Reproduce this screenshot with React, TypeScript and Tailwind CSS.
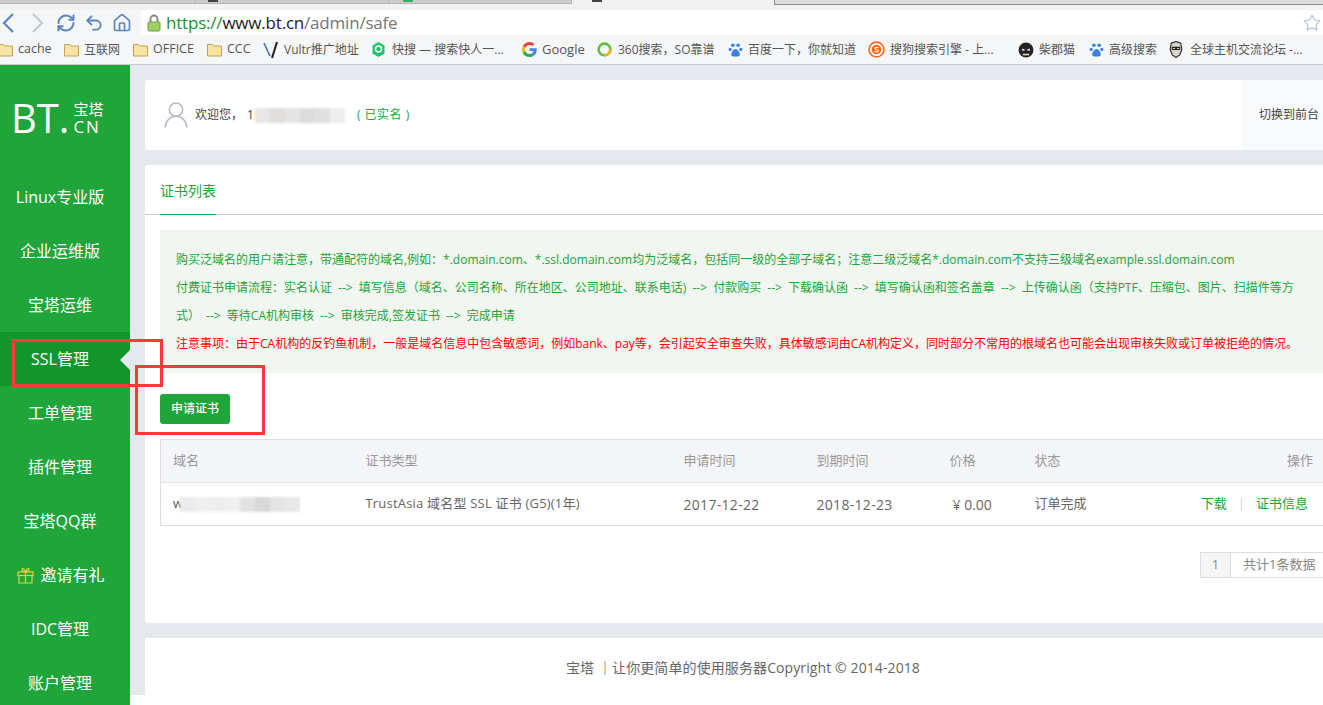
import React from 'react';
import { House, RefreshCw, Star, Undo2, UserRound } from 'lucide-react';

const menuItems = [
  'Linux专业版',
  '企业运维版',
  '宝塔运维',
  'SSL管理',
  '工单管理',
  '插件管理',
  '宝塔QQ群',
  '邀请有礼',
  'IDC管理',
  '账户管理',
];

function FolderIcon(): React.JSX.Element {
  return (
    <svg width="15" height="14" viewBox="0 0 15 14" className="shrink-0">
      <path d="M.5 1.500h5l1.500 1.500h7.500v10H.5z" fill="#f8e3a6" stroke="#c9a24f" strokeWidth="1" />
    </svg>
  );
}

function PawIcon(): React.JSX.Element {
  return (
    <svg width="15" height="16" viewBox="0 0 14 15" className="shrink-0">
      <circle cx="4.500" cy="3" r="1.700" fill="#3b7fe0" />
      <circle cx="9.500" cy="3" r="1.700" fill="#3b7fe0" />
      <circle cx="2" cy="7" r="1.500" fill="#3b7fe0" />
      <circle cx="12" cy="7" r="1.500" fill="#3b7fe0" />
      <path d="M7 6.500c2 0 4 3 4 5.200 0 2-2 2-4 2s-4 0-4-2c0-2.200 2-5.200 4-5.200z" fill="#3b7fe0" />
    </svg>
  );
}

function Bookmark({ icon, label, className }: { icon: React.ReactNode, label: string, className: string }) {
  return (
    <div className={`flex shrink-0 items-center gap-[5px] ${className}`}>
      {icon}
      <span className="whitespace-nowrap">{label}</span>
    </div>
  );
}

function Blur({ className, colors }: { className: string, colors: string[] }) {
  return (
    <div className={`flex h-[15px] overflow-hidden blur-[1px] ${className}`}>
      {colors.map((color, index) => (
        // eslint-disable-next-line react/no-array-index-key
        <div key={index} className="h-full w-[15px]" style={{ backgroundColor: color }} />
      ))}
    </div>
  );
}

function BrowserChrome(): React.JSX.Element {
  return (
    <div className="flex h-[65px] flex-col border-b border-[#c5cdd9] bg-[#f5f6f7]">
      <div className="flex h-[10px] bg-[#f2f2f2]">
        <div className="h-[4px] w-[196px] border-r border-b border-[#b5b5b5] bg-[#cdcdcd]" />
        <div className="h-[4px] w-[193px] border-r border-b border-[#b5b5b5] bg-[#cdcdcd] pl-[12px]">
          <div className="h-[2px] w-[10px] bg-[#444]" />
        </div>
        <div className="h-[4px] w-[183px] border-r border-b border-[#b5b5b5] bg-[#cdcdcd] pl-[14px]">
          <div className="h-[2px] w-[10px] bg-[#3fae5a]" />
        </div>
        <div className="h-[4px] w-[202px] pl-[20px]">
          <div className="h-[2px] w-[10px] bg-[#444]" />
        </div>
        <div className="h-[5px] grow border-b border-l border-[#8c8c8c] bg-[#dcdcdc]" />
      </div>
      <div className="flex h-[25px] items-center">
        <div className="flex w-[141px] shrink-0 items-center text-[#5b86bd]">
          <svg width="16" height="24" viewBox="0 0 16 24" fill="none" stroke="currentColor" strokeWidth="2.200">
            <path d="M13 3L4 12l9 9" />
          </svg>
          <svg width="16" height="24" viewBox="0 0 16 24" fill="none" stroke="#bccbdf" strokeWidth="2.200" className="ml-[14px]">
            <path d="M3 3l9 9-9 9" />
          </svg>
          <RefreshCw size={20} strokeWidth={2.4} className="ml-[10px]" />
          <Undo2 size={20} strokeWidth={2.2} className="ml-[8px]" />
          <House size={20} strokeWidth={2} className="ml-[8px]" />
        </div>
        <div className="flex h-[25px] grow items-center bg-white">
          <svg width="14" height="18" viewBox="0 0 14 18" className="ml-[6px] shrink-0">
            <path d="M3.500 8V5a3.500 3.500 0 0 1 7 0v3" fill="none" stroke="#808080" strokeWidth="1.800" />
            <rect x="1" y="8" width="12" height="9" rx="1" fill="#9fd064" stroke="#6f9e45" />
          </svg>
          <div className="ml-[5px] text-[17px] leading-none tracking-[-0.2px] whitespace-nowrap">
            <span className="text-[#1a8f2e]">https://</span>
            <span className="text-[#222]">www.bt.cn</span>
            <span className="text-[#767676]">/admin/safe</span>
          </div>
          <Star size={18} strokeWidth={1.4} className="mr-[2px] ml-auto text-[#a9bcd3]" />
        </div>
      </div>
      <div className="flex h-[29px] items-center overflow-hidden text-[12px] text-[#555]">
        <Bookmark className="ml-[-2px] w-[66px] text-[12.500px]" icon={<FolderIcon />} label="cache" />
        <Bookmark className="w-[69px]" icon={<FolderIcon />} label="互联网" />
        <Bookmark className="w-[74px] text-[12.500px]" icon={<FolderIcon />} label="OFFICE" />
        <Bookmark className="w-[56px] text-[12.500px]" icon={<FolderIcon />} label="CCC" />
        <Bookmark
          className="w-[109px]"
          icon={(
            <svg width="16" height="18" viewBox="0 0 16 18">
              <path d="M1 2l6 13" fill="none" stroke="#3b78b5" strokeWidth="1.600" />
              <path d="M14 1L9 17" fill="none" stroke="#222" strokeWidth="2" />
            </svg>
          )}
          label="Vultr推广地址"
        />
        <Bookmark
          className="w-[150px] gap-[7px]"
          icon={(
            <svg width="13" height="15" viewBox="0 0 13 15">
              <path d="M6.500 0l6 3.500v8l-6 3.500-6-3.500v-8z" fill="#1fc46b" />
              <circle cx="6.500" cy="7" r="3" fill="none" stroke="#fff" strokeWidth="1.500" />
            </svg>
          )}
          label="快搜 — 搜索快人一..."
        />
        <Bookmark
          className="w-[75px] text-[13px]"
          icon={(
            <svg width="15" height="15" viewBox="0 0 48 48">
              <path fill="#ea4335" d="M24 9.500c3.500 0 6.700 1.300 9.200 3.500l6.800-6.800C35.900 2.400 30.300 0 24 0 14.600 0 6.500 5.400 2.600 13.200l8 6.200C12.400 13.700 17.700 9.500 24 9.500z" />
              <path fill="#4285f4" d="M47 24.500c0-1.600-.2-3.100-.4-4.500H24v9h12.900c-.6 3-2.200 5.500-4.700 7.200l7.700 6C44.400 38 47 31.800 47 24.500z" />
              <path fill="#fbbc05" d="M10.500 28.600C10 27.100 9.800 25.600 9.800 24s.3-3.100.7-4.600l-8-6.200C.9 16.500 0 20.100 0 24s.9 7.500 2.600 10.800z" />
              <path fill="#34a853" d="M24 48c6.500 0 11.900-2.100 15.900-5.800l-7.700-6c-2.100 1.400-4.900 2.300-8.200 2.300-6.300 0-11.600-4.200-13.500-9.900l-8 6.200C6.500 42.600 14.600 48 24 48z" />
            </svg>
          )}
          label="Google"
        />
        <Bookmark
          className="w-[131px] gap-[6px]"
          icon={(
            <svg width="15" height="16" viewBox="0 0 14 15">
              <circle cx="7" cy="7" r="5.500" fill="none" stroke="#5fbf3a" strokeWidth="2.400" />
              <path d="M7 12.500a5.500 5.500 0 0 0 5.500-5.500" fill="none" stroke="#f3b21a" strokeWidth="2.400" />
            </svg>
          )}
          label="360搜索，SO靠谱"
        />
        <Bookmark className="w-[140px]" icon={<PawIcon />} label="百度一下，你就知道" />
        <Bookmark
          className="w-[150px] gap-[4px]"
          icon={(
            <svg width="17" height="17" viewBox="0 0 16 16">
              <circle cx="8" cy="8" r="7" fill="#fff" stroke="#f26b1d" strokeWidth="1.600" />
              <circle cx="8" cy="8" r="4.500" fill="#f26b1d" />
              <path d="M10 6.300C9 5.500 6.500 5.700 6.500 7c0 1.500 3.300 1 3.300 2.300 0 1.200-2.600 1.300-3.800.5" fill="none" stroke="#fff" strokeWidth="1" />
            </svg>
          )}
          label="搜狗搜索引擎 - 上..."
        />
        <Bookmark
          className="w-[71px] gap-[4px]"
          icon={(
            <svg width="16" height="16" viewBox="0 0 15 15">
              <circle cx="7.500" cy="7.500" r="7" fill="#222" />
              <path d="M4 6l3 1.500L4 8.500zM11 6L8 7.500 11 8.500z" fill="#fff" />
              <path d="M4.500 11h6v1.500h-6z" fill="#e8d4b0" />
            </svg>
          )}
          label="柴郡猫"
        />
        <Bookmark className="w-[79px]" icon={<PawIcon />} label="高级搜索" />
        <Bookmark
          className="gap-[6px]"
          icon={(
            <svg width="16" height="17" viewBox="0 0 15 16">
              <path d="M3 2l4.500-1.500L12 2l1 6-2 5-3.500 2.500L4 13 2 8z" fill="#d9d4c5" stroke="#222" />
              <path d="M4 6h3v2H4zM8 6h3v2H8z" fill="none" stroke="#222" />
            </svg>
          )}
          label="全球主机交流论坛 -..."
        />
      </div>
    </div>
  );
}

function Sidebar(): React.JSX.Element {
  return (
    <div className="flex w-[130px] shrink-0 flex-col bg-[#20a53a] text-white">
      <div className="flex h-[105px] shrink-0 items-start pt-[30px] pl-[11px]">
        <span className="text-[40px] leading-[46px]">BT.</span>
        <div className="ml-[4px] flex flex-col items-start">
          <span className="mt-[6px] text-[15px] leading-[16px]">宝塔</span>
          <span className="mt-[2px] text-[17px] leading-[15px] tracking-[2px]">CN</span>
        </div>
      </div>
      {menuItems.map((item) => {
        const isActive = item === 'SSL管理';
        return (
          <div
            key={item}
            className={`relative flex h-[54px] shrink-0 items-center justify-center pr-[10px] text-[16px] ${isActive ? 'bg-[#12962c]' : ''}`}
          >
            {item === '邀请有礼' && (
              <svg width="17" height="17" viewBox="0 0 17 17" className="mr-[6px] ml-[2px]" fill="none" stroke="#e6cf3a" strokeWidth="1.200">
                <rect x="1" y="5" width="15" height="3.500" />
                <path d="M2 8.500V16h13V8.500M8.500 5v11M8.500 5C6 5 4.500 3.500 5 2s3 .5 3.500 3zM8.500 5c2.500 0 4-1.500 3.500-3s-3 .5-3.500 3z" />
              </svg>
            )}
            {item}
            {isActive && (
              <div className="absolute top-[18px] right-0 h-0 w-0 border-y-[10px] border-r-[10px] border-y-transparent border-r-[#e5e8ed]" />
            )}
          </div>
        );
      })}
    </div>
  );
}

function CertTable(): React.JSX.Element {
  return (
    <table className="w-full table-fixed border-collapse border border-[#ddd] text-[13px]">
      <colgroup>
        <col className="w-[193px]" />
        <col className="w-[318px]" />
        <col className="w-[133px]" />
        <col className="w-[133px]" />
        <col className="w-[85px]" />
        <col className="w-[110px]" />
        <col />
      </colgroup>
      <thead>
        <tr className="h-[43px] border-b border-[#e5e5e5] bg-[#f4f5f9] text-left text-[#999]">
          <th className="px-[12px] font-normal">域名</th>
          <th className="px-[12px] font-normal">证书类型</th>
          <th className="px-[12px] font-normal">申请时间</th>
          <th className="px-[12px] font-normal">到期时间</th>
          <th className="px-[12px] font-normal">价格</th>
          <th className="px-[12px] font-normal">状态</th>
          <th className="px-[12px] text-right font-normal">操作</th>
        </tr>
      </thead>
      <tbody>
        <tr className="h-[43px] text-[#666]">
          <td className="px-[12px]">
            <div className="flex items-center">
              <span className="text-[#555]">w</span>
              <Blur className="ml-[-3px]" colors={['#ebebeb', '#efefef', '#eeeeee', '#f0f0f0', '#e2e2e2', '#d8d8d8', '#e4e4e4', '#e8e8e8']} />
            </div>
          </td>
          <td className="px-[12px] tracking-[0.2px]">TrustAsia 域名型 SSL 证书 (G5)(1年)</td>
          <td className="px-[12px] text-[14px] tracking-[0.3px]">2017-12-22</td>
          <td className="px-[12px] text-[14px] tracking-[0.3px]">2018-12-23</td>
          <td className="pr-[12px] pl-[15px] text-[14px]">¥ 0.00</td>
          <td className="px-[12px]">订单完成</td>
          <td className="pr-[17px] text-right whitespace-nowrap text-[#20a53a]">
            下载
            <span className="mx-[11px] text-[#c8d2e0]">|</span>
            证书信息
          </td>
        </tr>
      </tbody>
    </table>
  );
}

function Content(): React.JSX.Element {
  return (
    <div className="flex w-[1196px] shrink-0 flex-col pt-[15px]">
      <div className="flex h-[70px] items-center justify-between rounded-[3px] bg-white pl-[15px]">
        <div className="flex items-center text-[12px] text-[#444]">
          <UserRound size={32} strokeWidth={1.1} className="text-[#b9b6c9]" />
          <span className="ml-[3px]">欢迎您，</span>
          <span className="ml-[4px]">1</span>
          <Blur className="ml-[1px]" colors={['#e6e6e6', '#e2dedc', '#e4e4e4', '#dcdcdc', '#e0e0e0', '#eeeeee']} />
          <span className="ml-[12px] tracking-[0.5px] text-[#20a53a]">( 已实名 )</span>
        </div>
        <div className="flex h-full w-[100px] items-center bg-[#f9fafc] pl-[18px] text-[12px] whitespace-nowrap text-[#444]">
          切换到前台
        </div>
      </div>
      <div className="mt-[15px] flex h-[458px] flex-col rounded-[3px] bg-white">
        <div className="h-[50px] border-b border-[#ccc] px-[15px]">
          <div className="h-[50px] w-[56px] border-b-[1px] border-[#20a53a] pt-[17px] text-[14px] leading-[18px] whitespace-nowrap text-[#20a53a]">
            证书列表
          </div>
        </div>
        <div className="px-[15px] pt-[15px]">
          <div className="h-[143px] bg-[#f1f6f0] px-[16px] py-[16px] text-[12px] leading-[28px] text-[#20a53a] [word-spacing:3px]">
            <p>购买泛域名的用户请注意，带通配符的域名,例如：*.domain.com、*.ssl.domain.com均为泛域名，包括同一级的全部子域名；注意二级泛域名*.domain.com不支持三级域名example.ssl.domain.com</p>
            <p>付费证书申请流程：实名认证 --&gt; 填写信息（域名、公司名称、所在地区、公司地址、联系电话) --&gt; 付款购买 --&gt; 下载确认函 --&gt; 填写确认函和签名盖章 --&gt; 上传确认函（支持PTF、压缩包、图片、扫描件等方式） --&gt; 等待CA机构审核 --&gt; 审核完成,签发证书 --&gt; 完成申请</p>
            <p className="text-[#ff0000]">注意事项：由于CA机构的反钓鱼机制，一般是域名信息中包含敏感词，例如bank、pay等，会引起安全审查失败，具体敏感词由CA机构定义，同时部分不常用的根域名也可能会出现审核失败或订单被拒绝的情况。</p>
          </div>
          <button type="button" className="mt-[21px] block h-[30px] w-[70px] rounded-[3px] bg-[#20a53a] text-[12px] font-medium text-white">
            申请证书
          </button>
          <div className="mt-[15px]">
            <CertTable />
          </div>
          <div className="mt-[26px] flex justify-end">
            <div className="flex h-[26px] w-[126px] border border-[#ddd] text-[13px] text-[#888]">
              <div className="flex w-[30px] items-center justify-center border-r border-[#ddd] bg-[#f5f5f5]">1</div>
              <div className="flex grow items-center pl-[12px] whitespace-nowrap">共计1条数据</div>
            </div>
          </div>
        </div>
      </div>
      <div className="mt-[15px] flex h-[57px] items-center justify-center bg-white pt-[1px] text-[14px] tracking-[0.1px] text-[#666]">
        宝塔 ｜让你更简单的使用服务器Copyright © 2014-2018
      </div>
    </div>
  );
}

function App(): React.JSX.Element {
  return (
    <div className="relative h-[705px] w-[1323px] overflow-hidden bg-white font-['Open_Sans','Noto_Sans_CJK_SC',sans-serif]">
      <BrowserChrome />
      <div className="flex h-[640px]">
        <Sidebar />
        <div className="flex h-[630px] grow bg-[#e5e8ed] pl-[15px]">
          <Content />
        </div>
      </div>
      <div className="absolute top-[339px] left-[12px] h-[48px] w-[151px] border-[3px] border-[#fb3a3a]" />
      <div className="absolute top-[365px] left-[135px] h-[70px] w-[130px] border-[3px] border-[#fb3a3a]" />
    </div>
  );
}

export default App;
